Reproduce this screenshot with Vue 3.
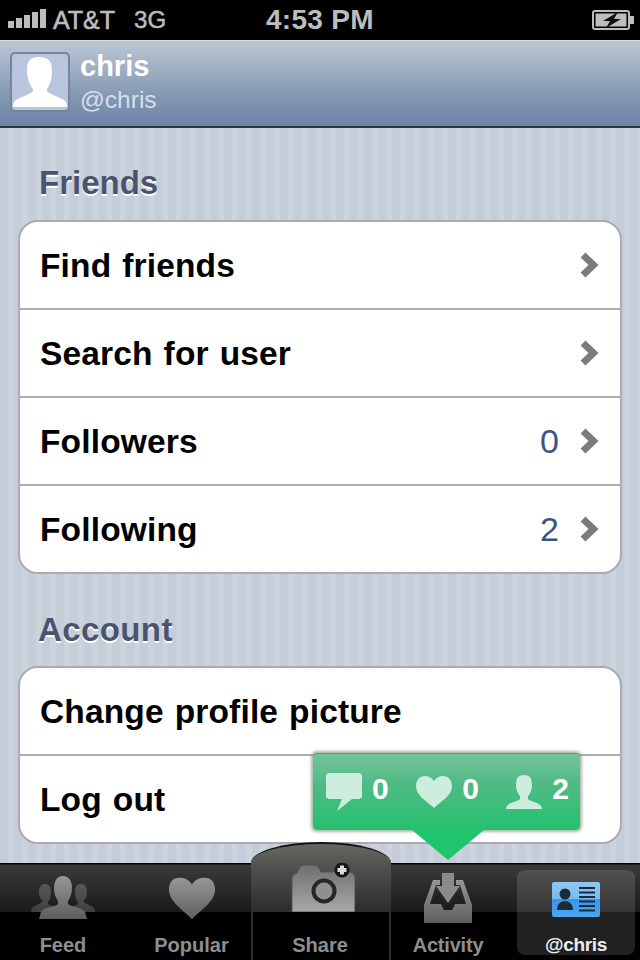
<template>
  <div class="phone">
    <div class="status">
      <div class="status-left">
        <div class="signal"><i v-for="h in signalBars" :key="h" :style="{ height: h + 'px' }"></i></div>
        <span class="carrier">AT&amp;T</span>
        <span class="net">3G</span>
      </div>
      <span class="clock">4:53 PM</span>
      <svg class="battery" width="42" height="22" viewBox="0 0 42 22">
        <rect x="1" y="2" width="36" height="18" rx="2" fill="#000" stroke="#bdbdbd" stroke-width="2" />
        <rect x="3.500" y="4.500" width="31" height="13" fill="#bdbdbd" />
        <rect x="38" y="7" width="4" height="8" fill="#bdbdbd" />
        <path d="M26 3 L11 12 L18 12 L14 19 L29 10 L22 10 Z" fill="#111" />
      </svg>
    </div>

    <header class="profile">
      <div class="avatar">
        <svg width="56" height="56" viewBox="0 0 56 56">
          <path d="M27 3c9 0 13 4 13 13 0 9-2 15-5 19v2c3 4 15 6 19 11 1 1 1 3 1 5H1c0-2 0-4 1-5 4-5 16-7 19-11v-2c-3-4-6-10-6-19 0-9 3-13 12-13z" fill="#fff" />
        </svg>
      </div>
      <div class="who">
        <div class="name">chris</div>
        <div class="handle">@chris</div>
      </div>
    </header>

    <main class="content">
      <h2 class="group-title">Friends</h2>
      <ul class="group">
        <li v-for="row in friends" :key="row.label" class="row">
          <span class="label">{{ row.label }}</span>
          <span v-if="row.count !== undefined" class="count">{{ row.count }}</span>
          <svg class="chev" width="20" height="26" viewBox="0 0 20 26">
            <path d="M4 3 L14.500 13 L4 23" fill="none" stroke="#7b7b7b" stroke-width="7" />
          </svg>
        </li>
      </ul>

      <h2 class="group-title second">Account</h2>
      <ul class="group">
        <li class="row"><span class="label">Change profile picture</span></li>
        <li class="row"><span class="label">Log out</span></li>
      </ul>
    </main>

    <nav class="tabbar">
      <div class="tab feed">
        <svg width="64" height="44" viewBox="0 0 64 44">
          <defs>
            <linearGradient id="ig" x1="0" y1="0" x2="0" y2="1">
              <stop offset="0" stop-color="#979797" />
              <stop offset="1" stop-color="#5e5e5e" />
            </linearGradient>
            <linearGradient id="igd" x1="0" y1="0" x2="0" y2="1">
              <stop offset="0" stop-color="#585858" />
              <stop offset="1" stop-color="#3e3e3e" />
            </linearGradient>
          </defs>
          <path d="M14 8c5 0 6 4 6 9 0 4-1 7-3 9v2l6 3-4 5H0c0-3 1-5 4-6 3-2 7-3 7-4v-2c-2-2-3-4-3-7 0-5 1-9 6-9z" fill="url(#igd)" />
          <path d="M14 8c5 0 6 4 6 9 0 4-1 7-3 9v2l6 3-4 5H0c0-3 1-5 4-6 3-2 7-3 7-4v-2c-2-2-3-4-3-7 0-5 1-9 6-9z" fill="url(#igd)" transform="matrix(-1 0 0 1 64 0)" />
          <path d="M32 0c6 0 9 5 9 12 0 6-2 10-4 13v3c2 3 14 3 17 8l2 7H8l2-7c3-5 15-5 17-8v-3c-2-3-4-7-4-13 0-7 3-12 9-12z" fill="url(#ig)" />
        </svg>
        <span>Feed</span>
      </div>
      <div class="tab popular">
        <svg width="48" height="44" viewBox="0 0 50 44">
          <path d="M25 8C21 2 16 1 12 1 5 1 1 6 1 13c0 13 15 22 24 31 9-9 24-18 24-31C49 6 45 1 38 1c-4 0-9 1-13 7z" fill="url(#ig)" />
        </svg>
        <span>Popular</span>
      </div>
      <div class="tab share">
        <div class="dome"></div>
        <svg width="68" height="49" viewBox="0 0 68 49">
          <defs>
            <linearGradient id="cam" x1="0" y1="0" x2="0" y2="1">
              <stop offset="0" stop-color="#6f6f6f" />
              <stop offset="1" stop-color="#a8a8a8" />
            </linearGradient>
          </defs>
          <path d="M5 49V16c0-3 2-5 5-6l2-4c1-3 3-4 5-4h10c2 0 4 1 5 3l2 4h28c3 0 6 3 6 6v34z" fill="url(#cam)" stroke="#555" />
          <circle cx="37" cy="28" r="10.500" fill="#8f8f8f" stroke="#262626" stroke-width="4" />
          <circle cx="55" cy="7" r="7.500" fill="#161616" />
          <path d="M55 2.500v9M50.500 7h9" stroke="#dcdcdc" stroke-width="4" />
        </svg>
        <span>Share</span>
      </div>
      <div class="tab activity">
        <svg width="48" height="50" viewBox="0 0 48 50">
          <path d="M9 7H16V12H12L6 31H17L20 37H28L31 31H42L36 12H32V7H39L48 32V50H0V32Z" fill="url(#ig)" />
          <path d="M18 0h12v13h6L24 30 12 13h6z" fill="#8b8b8b" />
        </svg>
        <span>Activity</span>
      </div>
      <div class="tab active">
        <svg width="48" height="35" viewBox="0 0 48 35">
          <defs>
            <linearGradient id="card" x1="0" y1="0" x2="0" y2="1">
              <stop offset="0" stop-color="#8ec7f2" />
              <stop offset="0.5" stop-color="#79baec" />
              <stop offset="0.5" stop-color="#3a97e8" />
              <stop offset="1" stop-color="#4aa5f0" />
            </linearGradient>
          </defs>
          <rect width="48" height="35" rx="2" fill="url(#card)" />
          <circle cx="13" cy="12" r="5.500" fill="#1c2b3a" />
          <path d="M5 28c0-6 4-9 8-9s8 3 8 9z" fill="#1c2b3a" />
          <path d="M27 6h16M27 10.500h16M27 15h16M27 19.500h16M27 24h16M27 28.500h16" stroke="#1c2b3a" stroke-width="2" />
        </svg>
        <span>@chris</span>
      </div>
    </nav>

    <div class="bubble">
      <div class="stat">
        <svg width="36" height="38" viewBox="0 0 36 38">
          <path d="M3 0h30c1 0 3 1 3 3v20c0 2-2 3-3 3h-7L11 38l5-12H3c-1 0-3-1-3-3V3c0-2 2-3 3-3z" fill="#cdeede" />
        </svg>
        <b>0</b>
      </div>
      <div class="stat">
        <svg width="36" height="32" viewBox="0 0 36 32">
          <path d="M18 5C15 1 12 0 9 0 4 0 0 4 0 10c0 10 11 15 18 22 7-7 18-12 18-22 0-6-4-10-9-10-3 0-6 1-9 5z" fill="#cdeede" />
        </svg>
        <b>0</b>
      </div>
      <div class="stat">
        <svg width="36" height="34" viewBox="0 0 36 34">
          <path d="M18 0c6 0 8 4 8 10 0 5-2 9-4 11v3c2 3 14 3 14 10H0c0-7 12-7 14-10v-3c-2-2-4-6-4-11 0-6 2-10 8-10z" fill="#cdeede" />
        </svg>
        <b>2</b>
      </div>
      <div class="arrow"></div>
    </div>
  </div>
</template>

<script setup>
const signalBars = [7, 10, 13, 16, 19]

const friends = [
  { label: 'Find friends' },
  { label: 'Search for user' },
  { label: 'Followers', count: 0 },
  { label: 'Following', count: 2 }
]
</script>

<style>
html,
body {
  margin: 0;
  background: #000;
}
</style>

<style scoped>
.phone {
  position: relative;
  width: 640px;
  height: 960px;
  overflow: hidden;
  display: flex;
  flex-direction: column;
  font-family: "Liberation Sans", Arial, sans-serif;
  background-color: #c8d0da;
  background-image: repeating-linear-gradient(90deg, #c5cdd8 0, #c5cdd8 8px, #cbd3dd 8px, #cbd3dd 14px);
}

.status {
  height: 40px;
  flex: none;
  background: #000;
  color: #bdbdbd;
  display: flex;
  align-items: center;
  justify-content: space-between;
  padding: 0 6px 0 8px;
  position: relative;
}

.status-left {
  display: flex;
  align-items: center;
  font-size: 25px;
}

.signal {
  display: flex;
  align-items: flex-end;
  gap: 2px;
  height: 20px;
  margin: 0 7px 4px 0;
}

.signal i {
  width: 6px;
  background: #bdbdbd;
}

.carrier {
  -webkit-text-stroke: 0.6px #bdbdbd;
}

.net {
  margin-left: 19px;
  font-size: 24px;
  -webkit-text-stroke: 0.5px #bdbdbd;
}

.clock {
  position: absolute;
  left: 266px;
  font-size: 28px;
  font-weight: 700;
  letter-spacing: 0.3px;
}

.profile {
  height: 88px;
  flex: none;
  box-sizing: border-box;
  display: flex;
  align-items: center;
  padding: 0 0 3px 10px;
  gap: 10px;
  border-top: 1px solid #d8dde2;
  border-bottom: 2px solid #2e3644;
  background: linear-gradient(#bdc8d6 0, #a6b4c8 25%, #7f95b1 70%, #6f84a6 100%);
}

.avatar {
  width: 60px;
  height: 60px;
  box-sizing: border-box;
  border: 2px solid #75859a;
  border-radius: 5px;
  background: #b9c5de;
  overflow: hidden;
}

.avatar svg {
  display: block;
}

.who {
  display: flex;
  flex-direction: column;
  gap: 3px;
}

.name {
  color: #fff;
  font-size: 29px;
  font-weight: 700;
  line-height: 32px;
}

.handle {
  color: #d5dfec;
  font-size: 24.500px;
  line-height: 30px;
}

.content {
  flex: 1;
  padding: 0 18px;
  min-height: 0;
}

.group-title {
  margin: 36px 0 18px 21px;
  font-size: 33px;
  line-height: 38px;
  font-weight: 700;
  color: #4a5470;
  text-shadow: 0 2px 0 #fff;
}

.group-title.second {
  margin: 37px 0 17px 20px;
  letter-spacing: 0.4px;
}

.group {
  list-style: none;
  margin: 0;
  padding: 0;
  background: #fff;
  border: 2px solid #a9abae;
  border-radius: 20px;
  overflow: hidden;
}

.row {
  height: 88px;
  box-sizing: border-box;
  display: flex;
  align-items: center;
  padding: 1px 20px 0;
  border-top: 2px solid #abadb0;
}

.row:first-child {
  height: 86px;
  border-top: 0;
}

.label {
  flex: 1;
  color: #000;
  font-size: 33.500px;
  font-weight: 700;
  letter-spacing: 0.15px;
  word-spacing: 1.500px;
}

.count {
  color: #3b5580;
  font-size: 34px;
  margin-right: 20px;
}

.chev {
  margin: -2px 1px 0 0;
}

.tabbar {
  position: absolute;
  left: 0;
  right: 0;
  bottom: 0;
  height: 97px;
  display: flex;
  background: linear-gradient(#000 0, #000 1px, #3a3a3a 2px, #1a1a1a 50%, #000 50%, #000 100%);
}

.tab {
  position: relative;
  width: 125px;
  display: flex;
  flex-direction: column;
  align-items: center;
  justify-content: flex-end;
  padding-bottom: 3px;
  box-sizing: border-box;
  color: #8e8e8e;
  font-size: 20px;
  font-weight: 700;
}

.tab svg {
  position: relative;
  margin-bottom: 13px;
}

.tab span {
  position: relative;
  line-height: 24px;
}

.feed {
  width: 126px;
}

.popular {
  padding-left: 6px;
}

.share {
  width: 140px;
  border-left: 2px solid #2c2c2c;
  border-right: 2px solid #2c2c2c;
}

.share svg {
  margin-bottom: 21px;
}

.share span {
  margin-right: 2px;
}

.dome {
  position: absolute;
  left: -2px;
  right: -2px;
  top: -21px;
  height: 70px;
  box-sizing: border-box;
  border-top: 2px solid #111;
  border-radius: 50% 50% 0 0 / 21px 21px 0 0;
  background: linear-gradient(#666662, #4a4a48 45%, #2c2c2c);
}

.activity {
  width: 124px;
  padding-right: 10px;
  letter-spacing: -0.2px;
}

.activity svg {
  margin-bottom: 10px;
}

.active {
  width: 118px;
  margin: 7px 4px 5px 2px;
  padding-bottom: 0;
  background: rgba(255, 255, 255, 0.13);
  border-radius: 8px;
  color: #eee;
  font-size: 19px;
  letter-spacing: -0.3px;
}

.active svg {
  margin-bottom: 16px;
}

.active span {
  margin-bottom: -2px;
}

.bubble {
  position: absolute;
  left: 313px;
  top: 753px;
  width: 267px;
  height: 77px;
  box-sizing: border-box;
  padding: 0 11px 0 13px;
  display: flex;
  align-items: center;
  justify-content: space-between;
  border-radius: 4px;
  background: linear-gradient(#74c49c 0, #4fbb84 40%, #26c06f 100%);
  box-shadow: inset 0 1px 0 #4f9e78, 0 0 3px 2px rgba(140, 150, 140, 0.7);
}

.stat {
  display: flex;
  align-items: center;
  gap: 10px;
  color: #fff;
  font-size: 30px;
  font-weight: 700;
}

.stat b {
  margin-bottom: 6px;
}

.arrow {
  position: absolute;
  left: 99px;
  top: 77px;
  width: 0;
  height: 0;
  border-left: 36px solid transparent;
  border-right: 36px solid transparent;
  border-top: 30px solid #1fc46c;
}
</style>
